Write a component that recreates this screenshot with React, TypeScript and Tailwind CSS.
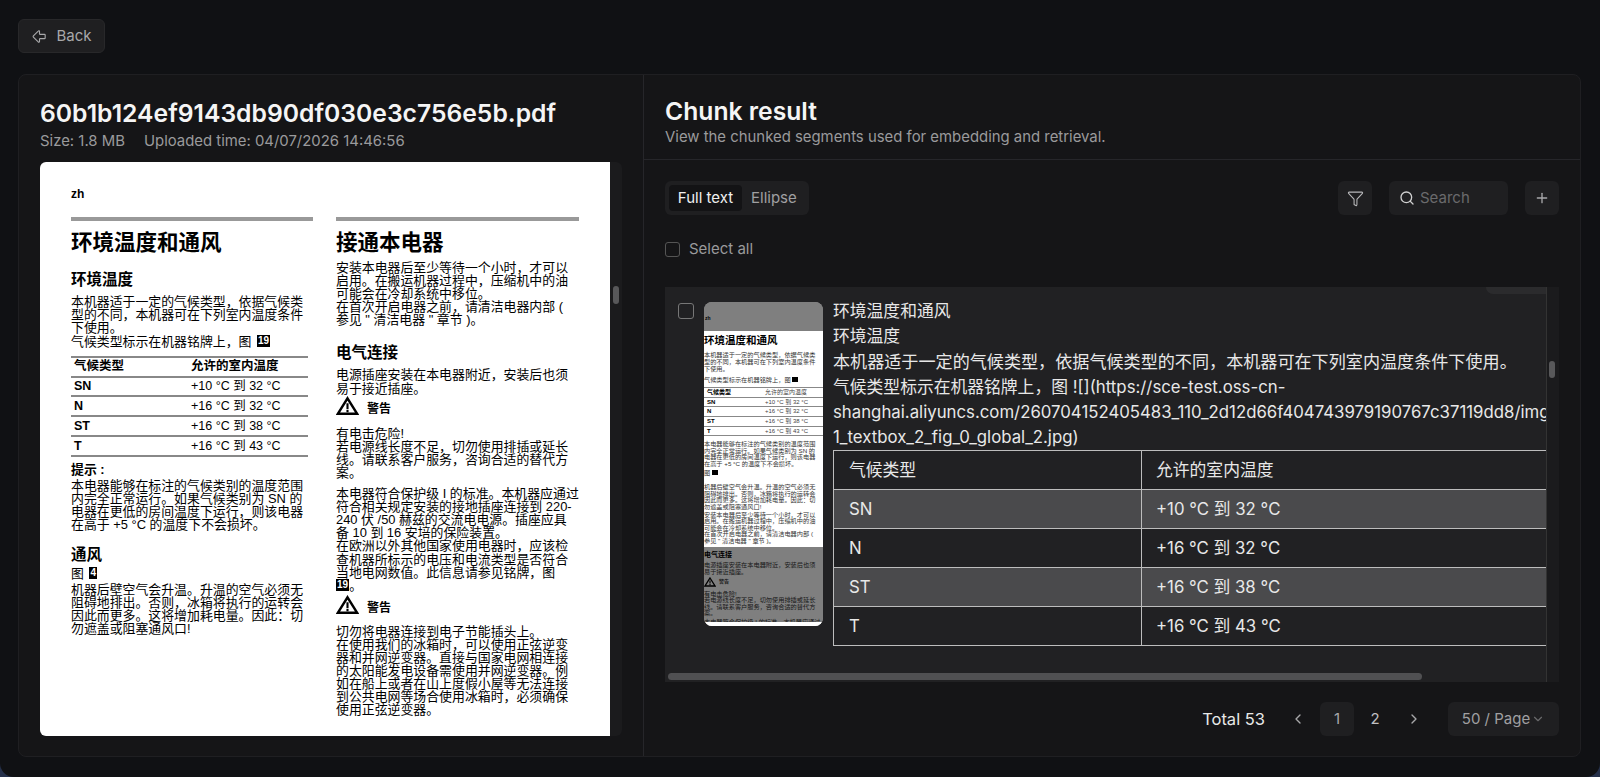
import { ArrowBigLeft, ChevronDown, ChevronLeft, ChevronRight, Filter, Plus, Search } from "lucide-react";

const CJK = "font-['Inter','Noto_Sans_CJK_SC',sans-serif]";
const DOC = "font-['Liberation_Sans','Noto_Sans_CJK_SC',sans-serif]";

const climateRows = [
  ["SN", "+10 °C 到 32 °C"],
  ["N", "+16 °C 到 32 °C"],
  ["ST", "+16 °C 到 38 °C"],
  ["T", "+16 °C 到 43 °C"],
];

// full-width comma and colon in the Chinese copy
const zh = (s: string) => s.replace(/,/g, "\uFF0C").replace(/:/g, "\uFF1A");

function Lines({ items, className = "" }: { items: string[]; className?: string }) {
  return (
    <div className={`text-[12.9px] leading-[13.1px] text-black ${className}`}>
      {items.map((line) => (
        <div key={line} className="whitespace-nowrap">
          {zh(line)}
        </div>
      ))}
    </div>
  );
}

function TinyLines({ items }: { items: string[] }) {
  return (
    <>
      {items.map((line) => (
        <div key={line} className="whitespace-nowrap">
          {zh(line)}
        </div>
      ))}
    </>
  );
}

function FigTag({ n }: { n: string }) {
  return <span className="mx-0.5 inline-block bg-black px-[1px] align-top text-[10px] leading-[12px] font-bold text-white">{n}</span>;
}

function WarningIcon({ className = "" }: { className?: string }) {
  return (
    <svg viewBox="0 0 24 20" className={className} fill="none" stroke="#000" strokeWidth="2.6">
      <path d="M12 2 22 18H2Z" strokeLinejoin="miter" />
      <path d="M12 7v6M12 14v2.5" strokeWidth="2.2" />
    </svg>
  );
}

function Warning({ className = "" }: { className?: string }) {
  return (
    <div className={`flex items-end gap-2 ${className}`}>
      <WarningIcon className="h-[20px] w-[23px]" />
      <span className="text-[12px] leading-[13px] font-bold">警告</span>
    </div>
  );
}

function PdfPage() {
  return (
    <div className={`h-[574px] w-[570px] shrink-0 overflow-hidden rounded-l-md bg-white pt-[25px] pl-[31px] text-black ${DOC}`}>
      <div className="text-[12px] leading-[14px] font-bold">zh</div>
      <div className="mt-[16px] flex gap-[23px]">
        <div className="w-[242px]">
          <div className="h-[4px] bg-[#999]" />
          <div className="mt-[8px] text-[21.5px] leading-[28px] font-bold">环境温度和通风</div>
          <div className="mt-[13px] text-[15.5px] leading-[20px] font-bold">环境温度</div>
          <div className="mt-[5px] text-[12.9px] leading-[13.2px]">
            <TinyLines items={["本机器适于一定的气候类型,依据气候类", "型的不同,本机器可在下列室内温度条件", "下使用。"]} />
            <div className="whitespace-nowrap">
              {zh("气候类型标示在机器铭牌上,图 ")}
              <FigTag n="19" />
            </div>
          </div>
          <div className="mt-[8px] w-[237px] border-t-2 border-[#888]">
            <div className="flex h-[19.8px] items-center border-b-2 border-[#888] pl-[3px] text-[12.5px] font-bold">
              <span className="w-[117px]">气候类型</span>
              <span>允许的室内温度</span>
            </div>
            {climateRows.map(([code, range]) => (
              <div key={code} className="flex h-[19.8px] items-center border-b-2 border-[#888] pl-[3px] text-[12.5px]">
                <span className="w-[117px] font-bold">{code}</span>
                <span>{range}</span>
              </div>
            ))}
          </div>
          <div className="mt-[5px] text-[12.9px] leading-[16px] font-bold">提示 :</div>
          <Lines
            className="mt-[1px]"
            items={[
              "本电器能够在标注的气候类别的温度范围",
              "内完全正常运行。如果气候类别为 SN 的",
              "电器在更低的房间温度下运行,则该电器",
              "在高于 +5 °C 的温度下不会损坏。",
            ]}
          />
          <div className="mt-[14px] text-[15.5px] leading-[20px] font-bold">通风</div>
          <div className="mt-[2px] text-[12.9px] leading-[14px]">
            图 <FigTag n="4" />
          </div>
          <Lines
            className="mt-[2px]"
            items={[
              "机器后壁空气会升温。升温的空气必须无",
              "阻碍地排出。否则,冰箱将执行的运转会",
              "因此而更多。这将增加耗电量。因此:切",
              "勿遮盖或阻塞通风口!",
            ]}
          />
        </div>
        <div className="w-[243px]">
          <div className="h-[4px] bg-[#999]" />
          <div className="mt-[8px] text-[21.5px] leading-[28px] font-bold">接通本电器</div>
          <Lines
            className="mt-[4px]"
            items={[
              "安装本电器后至少等待一个小时,才可以",
              "启用。在搬运机器过程中,压缩机中的油",
              "可能会在冷却系统中移位。",
              "在首次开启电器之前,请清洁电器内部 (",
              "参见 \" 清洁电器 \" 章节 )。",
            ]}
          />
          <div className="mt-[17px] text-[15.5px] leading-[20px] font-bold">电气连接</div>
          <Lines className="mt-[5px]" items={["电源插座安装在本电器附近,安装后也须", "易于接近插座。"]} />
          <Warning className="mt-[1px]" />
          <Lines
            className="mt-[11px]"
            items={["有电击危险!", "若电源线长度不足,切勿使用排插或延长", "线。请联系客户服务,咨询合适的替代方", "案。"]}
          />
          <div className="mt-[8px] text-[12.9px] leading-[13.1px]">
            <TinyLines
              items={[
                "本电器符合保护级 I 的标准。本机器应通过",
                "符合相关规定安装的接地插座连接到 220-",
                "240 伏 /50 赫兹的交流电电源。插座应具",
                "备 10 到 16 安培的保险装置。",
                "在欧洲以外其他国家使用电器时,应该检",
                "查机器所标示的电压和电流类型是否符合",
                "当地电网数值。此信息请参见铭牌,图",
              ]}
            />
            <div className="h-[13px] whitespace-nowrap">
              <span className="inline-block bg-black px-[1px] align-top text-[10px] leading-[12px] font-bold text-white">19</span>。
            </div>
          </div>
          <Warning className="mt-[3px]" />
          <Lines
            className="mt-[10px]"
            items={[
              "切勿将电器连接到电子节能插头上。",
              "在使用我们的冰箱时,可以使用正弦逆变",
              "器和并网逆变器。直接与国家电网相连接",
              "的太阳能发电设备需使用并网逆变器。例",
              "如在船上或者在山上度假小屋等无法连接",
              "到公共电网等场合使用冰箱时,必须确保",
              "使用正弦逆变器。",
            ]}
          />
        </div>
      </div>
    </div>
  );
}

function Thumbnail() {
  return (
    <div className={`relative mt-[-1px] h-[324px] w-[119px] shrink-0 overflow-hidden rounded-lg bg-white text-black ${DOC}`}>
      <div className="absolute top-[13px] left-px text-[5px] leading-[6px] font-bold">zh</div>
      <div className="pt-[31px] text-[4px] leading-[5px]">
        <div className="text-[10.5px] leading-[14px] font-bold">环境温度和通风</div>
        <div className="mt-[5px] text-[6.2px] leading-[6.8px] text-[#333]">
          <TinyLines items={["本机器适于一定的气候类型,依据气候类", "型的不同,本机器可在下列室内温度条件", "下使用。"]} />
          <div className="mt-[5px] whitespace-nowrap">
            {zh("气候类型标示在机器铭牌上,图 ")}
            <span className="inline-block h-[5px] w-[6px] bg-black" />
          </div>
        </div>
        <div className="mt-[3px] border-t border-[#888] text-[6px] leading-[8.6px]">
          {[["气候类型", "允许的室内温度"], ...climateRows].map(([a, b]) => (
            <div key={a} className="flex border-b border-[#888] pl-[3px]">
              <span className="w-[58px] font-bold">{a}</span>
              <span className="text-[#444]">{b}</span>
            </div>
          ))}
        </div>
        <div className="mt-[5px] text-[6.2px] leading-[6.6px] text-[#333]">
          <TinyLines
            items={[
              "本电器能够在标注的气候类别的温度范围",
              "内完全正常运行。如果气候类别为 SN 的",
              "电器在更低的房间温度下运行,则该电器",
              "在高于 +5 °C 的温度下不会损坏。",
            ]}
          />
          <div className="mt-[2px] whitespace-nowrap">
            图 <span className="inline-block h-[5px] w-[6px] bg-black" />
          </div>
          <div className="mt-[8px]">
            <TinyLines
              items={[
                "机器后壁空气会升温。升温的空气必须无",
                "阻碍地排出。否则,冰箱将执行的运转会",
                "因此而更多。这将增加耗电量。因此:切",
                "勿遮盖或阻塞通风口!",
              ]}
            />
          </div>
          <div className="mt-[1px]">
            <TinyLines
              items={[
                "安装本电器后至少等待一个小时,才可以",
                "启用。在搬运机器过程中,压缩机中的油",
                "可能会在冷却系统中移位。",
                "在首次开启电器之前,请清洁电器内部 (",
                "参见 \" 清洁电器 \" 章节 )。",
              ]}
            />
          </div>
        </div>
        <div className="mt-[6px] text-[7px] leading-[10px] font-bold">电气连接</div>
        <div className="mt-[2px] text-[6.2px] leading-[6.6px] text-[#333]">
          <TinyLines items={["电源插座安装在本电器附近,安装后也须", "易于接近插座。"]} />
          <div className="flex h-[12px] items-center gap-[3px]">
            <WarningIcon className="h-[10px] w-[12px]" />
            <span className="text-[5px] font-bold">警告</span>
          </div>
          <div className="mt-[3px]">
            <TinyLines items={["有电击危险!", "若电源线长度不足,切勿使用排插或延长", "线。请联系客户服务,咨询合适的替代方", "案。"]} />
          </div>
          <div className="mt-[2px] whitespace-nowrap">本电器符合保护级 I 的标准。本机器应通过</div>
        </div>
      </div>
      {/* dimmed bands over the page preview */}
      <div className="absolute inset-x-0 top-0 h-[29px] bg-black/50" />
      <div className="absolute inset-x-0 top-[245px] h-[75px] bg-black/50" />
      <div className="absolute inset-x-0 bottom-0 h-[4px] bg-white" />
    </div>
  );
}

function ChunkCard() {
  return (
    <div className="relative h-[395px] w-[882px] shrink-0 overflow-hidden border-r border-[#333] bg-[#212123]">
      <div className="absolute top-0 right-0 h-[7px] w-[60px] rounded-bl-lg bg-[#2b2b2d]" />
      <div className="flex h-full pt-[12px] pl-[13px]">
        <div className="mt-[4px] mr-[10px] size-4 shrink-0 rounded-[3px] border border-[#777]" />
        <div className="mt-[4px]">
          <Thumbnail />
        </div>
        <div className={`ml-[10px] min-w-0 flex-1 overflow-hidden text-[16.8px] leading-[25.2px] text-[#e8e8e8] ${CJK}`}>
          <div>环境温度和通风</div>
          <div>环境温度</div>
          <div className="text-[17.1px] whitespace-nowrap">{zh("本机器适于一定的气候类型,依据气候类型的不同,本机器可在下列室内温度条件下使用。")}</div>
          <div className="whitespace-nowrap">{zh("气候类型标示在机器铭牌上,图")} ![](https://sce-test.oss-cn-</div>
          <div className="whitespace-nowrap">shanghai.aliyuncs.com/260704152405483_110_2d12d66f404743979190767c37119dd8/img</div>
          <div className="whitespace-nowrap">1_textbox_2_fig_0_global_2.jpg)</div>
          <table className="w-[780px] table-fixed border-collapse border border-[#bdbdbd] text-[16.8px]">
            <tbody>
              <tr className="h-[39px]">
                <td className="w-[308px] border border-[#bdbdbd] pl-[15px]">气候类型</td>
                <td className="border border-[#bdbdbd] pl-[14px]">允许的室内温度</td>
              </tr>
              {climateRows.map(([code, range], i) => (
                <tr key={code} className={`h-[39px] ${i % 2 === 0 ? "bg-[#4a4a4c]" : ""}`}>
                  <td className="border border-[#bdbdbd] pl-[15px]">{code}</td>
                  <td className="border border-[#bdbdbd] pl-[14px]">{range}</td>
                </tr>
              ))}
            </tbody>
          </table>
        </div>
      </div>
      <div className="absolute bottom-[2px] left-[3px] h-[7px] w-[754px] rounded-full bg-[#505052]" />
    </div>
  );
}

export default function App() {
  return (
    <div className="h-[777px] w-[1600px] overflow-hidden bg-[#25304a] font-['Inter',sans-serif] text-white">
      <div className="flex h-[777px] flex-col rounded-b-[14px] bg-[#101114]">
        <div className="px-[18px] pt-[19px]">
          <button className="flex h-[34px] w-[87px] items-center justify-center gap-2 rounded-md border border-[#28282a] bg-[#1f1f21] text-[15px] text-[#a8a8aa]">
            <ArrowBigLeft className="size-[17px]" strokeWidth={1.6} />
            Back
          </button>
        </div>
        <div className="mt-[21px] ml-[18px] flex h-[683px] w-[1563px] rounded-lg border border-[#1f1f22] bg-[#151517]">
          <div className="flex w-[625px] shrink-0 flex-col border-r border-[#26262a] pt-[20px] pl-[21px]">
            <div className="text-[24.7px] leading-[36px] font-semibold text-[#f5f5f5]">60b1b124ef9143db90df030e3c756e5b.pdf</div>
            <div className="flex gap-[19px] text-[14.9px] leading-[20px] text-[#9a9a9c]">
              <span>Size: 1.8 MB</span>
              <span>Uploaded time: 04/07/2026 14:46:56</span>
            </div>
            <div className="mt-[11px] flex h-[574px] w-[582px] rounded-md bg-[#1b1b1d]">
              <PdfPage />
              <div className="mt-[124px] ml-[3px] h-[18px] w-[6px] rounded-full bg-[#58585a]" />
            </div>
          </div>
          <div className="flex min-w-0 flex-1 flex-col">
            <div className="h-[85px] shrink-0 border-b border-[#26262a] px-[21px] pt-[20px]">
              <div className="text-[24.7px] leading-[32px] font-semibold text-[#f5f5f5]">Chunk result</div>
              <div className="text-[14.9px] leading-[20px] text-[#9a9a9c]">View the chunked segments used for embedding and retrieval.</div>
            </div>
            <div className="flex flex-1 flex-col pr-[21px] pl-[21px]">
              <div className="mt-[21px] flex h-[34px] items-center">
                <div className="flex h-[34px] w-[144px] items-center rounded-md bg-[#1f1f21] px-[4px] text-[15px]">
                  <span className="flex h-[26px] w-[73px] items-center justify-center rounded bg-[#131315] text-[#f0f0f0]">Full text</span>
                  <span className="ml-[9px] text-[#a0a0a2]">Ellipse</span>
                </div>
                <div className="ml-auto flex gap-[17px]">
                  <button className="flex size-[34px] items-center justify-center rounded-md bg-[#1f1f21] text-[#b8b8ba]">
                    <Filter className="size-[17px]" strokeWidth={1.5} />
                  </button>
                  <div className="flex h-[34px] w-[119px] items-center gap-[5px] rounded-md bg-[#1f1f21] px-[10px] text-[15px] text-[#6a6a6c]">
                    <Search className="size-4 text-[#d0d0d0]" />
                    Search
                  </div>
                  <button className="flex size-[34px] items-center justify-center rounded-md bg-[#1f1f21] text-[#a8a8aa]">
                    <Plus className="size-4" />
                  </button>
                </div>
              </div>
              <label className="mt-[27px] flex h-[15px] items-center gap-[9px] text-[15px] text-[#9a9a9c]">
                <span className="size-[15px] rounded-[3px] border border-[#555]" />
                Select all
              </label>
              <div className="mt-[30px] flex h-[395px] w-[894px] bg-[#1b1b1d]">
                <ChunkCard />
                <div className="mt-[74px] ml-[2px] h-[17px] w-[6px] rounded-full bg-[#58585a]" />
              </div>
              <div className="mt-[20px] flex h-[34px] items-center justify-end text-[#c0c0c2]">
                <span className="text-[16.5px] text-[#e8e8e8]">Total 53</span>
                <ChevronLeft className="ml-[25px] size-4 text-[#a8a8aa]" />
                <span className="ml-[14px] flex size-[34px] items-center justify-center rounded-md bg-[#1f1f21] text-[15px] text-[#a8a8aa]">1</span>
                <span className="flex w-[42px] justify-center text-[15px]">2</span>
                <ChevronRight className="ml-[10px] size-4 text-[#a8a8aa]" />
                <div className="ml-[26px] flex h-[34px] w-[111px] items-center justify-center rounded-md bg-[#1f1f21] text-[15px] text-[#a0a0a2]">
                  50 / Page
                  <ChevronDown className="ml-[1px] size-3.5 text-[#6a6a6c]" />
                </div>
              </div>
            </div>
          </div>
        </div>
      </div>
    </div>
  );
}
